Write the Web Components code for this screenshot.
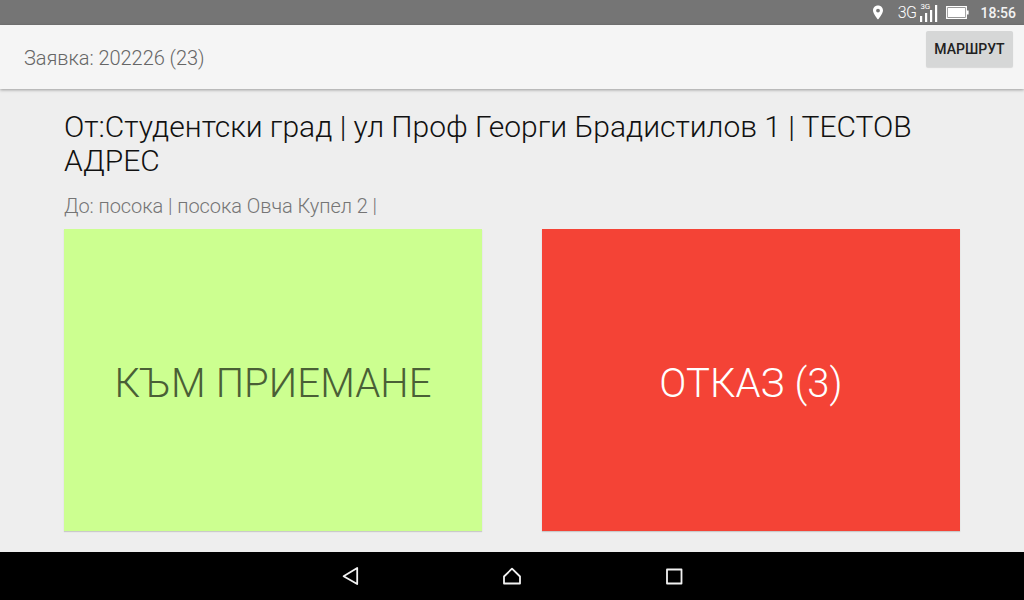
<!DOCTYPE html>
<html lang="bg">
<head>
<meta charset="utf-8">
<title>Заявка</title>
<style>
  html, body { margin: 0; height: 100%; }
  body { font-family: Roboto, "Liberation Sans", sans-serif; background: #eeeeee; overflow: hidden; }
  #app { display: flex; flex-direction: column; width: 1024px; height: 600px; }
</style>
</head>
<body>
<div id="app">
  <status-bar time="18:56"></status-bar>
  <app-toolbar>
    Заявка: 202226 (23)
    <flat-button slot="action">МАРШРУТ</flat-button>
  </app-toolbar>
  <order-view>
    <span slot="from">От:Студентски град | ул Проф Георги Брадистилов 1 | ТЕСТОВ АДРЕС</span>
    <span slot="to">До: посока | посока Овча Купел 2 |</span>
    <big-action slot="actions" style="--bg:#ccff90;--fg:#4a5f36">КЪМ ПРИЕМАНЕ</big-action>
    <big-action slot="actions" style="--bg:#f44336;--fg:#ffffff">ОТКАЗ (3)</big-action>
  </order-view>
  <nav-bar></nav-bar>
</div>

<script>
// status bar on top, icons are plain svg
class StatusBar extends HTMLElement {
  connectedCallback() {
    const root = this.shadowRoot || this.attachShadow({ mode: "open" });
    root.innerHTML = `
      <style>
        :host { display: flex; flex: none; height: 25px; background: #757575; color: #fff;
                align-items: center; justify-content: flex-end; padding-right: 8px;
                font: 500 14px Roboto, sans-serif; box-sizing: border-box; }
        svg { display: block; flex: none; }
        .net { font-weight: 300; font-size: 16px; margin-left: 14px; letter-spacing: -0.6px; }
        .time { margin-left: 11px; color: #f2f2f2; }
        .sup { position: absolute; top: 1px; left: 0; font-size: 8px; font-weight: 400; line-height: 8px; letter-spacing: -0.3px; }
        .signal { position: relative; margin-left: 4px; width: 18px; height: 21px; }
      </style>
      <svg width="12" height="15" viewBox="0 0 12 15">
        <path fill="#fff" fill-rule="evenodd" d="M6 0.5C2.9 0.5 1 2.8 1 5.4 1 8.8 6 14.5 6 14.5S11 8.8 11 5.4C11 2.8 9.1 0.5 6 0.5ZM6 3.7A1.9 1.9 0 1 1 6 7.5 1.9 1.9 0 0 1 6 3.7Z"/>
      </svg>
      <span class="net">3G</span>
      <span class="signal">
        <span class="sup">3G</span>
        <svg width="18" height="21" viewBox="0 0 18 21" style="position:absolute;top:0;left:0">
          <path fill="#fff" d="M0 14h2.2v6H0zM5 11h2.2v9H5zM10 8h2.2v12H10zM15 3h2.2v17H15z"/>
        </svg>
      </span>
      <svg width="23" height="13" viewBox="0 0 23 13" style="margin-left:8px">
        <path fill="none" stroke="#fff" stroke-width="1.3" d="M.7.7h19.6v11.6H.7z"/>
        <path fill="#fff" d="M2 2h17v9H2zM21 4.5h1.6v4H21z"/>
      </svg>
      <span class="time">${this.getAttribute("time")}</span>
    `;
  }
}

class AppToolbar extends HTMLElement {
  constructor() {
    super();
    this.attachShadow({ mode: "open" });
    this.shadowRoot.innerHTML = `
      <style>
        :host { display: flex; flex: none; height: 64px; background: #f5f5f5; color: #666;
                box-sizing: border-box; padding: 0 11px 0 24px; position: relative; z-index: 1;
                box-shadow: 0 1px 3px rgba(0,0,0,.35); font: 300 20px Roboto, sans-serif; }
        .title { flex: 1; align-self: center; padding-top: 2px; letter-spacing: -0.05px; }
        .action { padding-top: 6px; letter-spacing: 0; }
      </style>
      <div class="title"><slot></slot></div>
      <div class="action"><slot name="action"></slot></div>
    `;
  }
}

class FlatButton extends HTMLElement {
  constructor() {
    super();
    this.attachShadow({ mode: "open" });
    this.shadowRoot.innerHTML = `
      <style>
        :host { display: flex; align-items: center; justify-content: center; width: 87px; height: 36px;
                background: #d6d7d7; color: #212121; border-radius: 2px;
                box-shadow: 0 1px 1px rgba(0,0,0,.12); font: 500 14px Roboto, sans-serif; }
      </style>
      <slot></slot>
    `;
  }
}

class OrderView extends HTMLElement {
  constructor() {
    super();
    this.attachShadow({ mode: "open" });
    this.shadowRoot.innerHTML = `
      <style>
        :host { display: block; flex: 1; min-height: 0; background: #eeeeee; box-sizing: border-box;
                padding: 21px 64px 0; font-family: Roboto, sans-serif; font-weight: 300; }
        .from { font-size: 30px; line-height: 34px; color: #111; letter-spacing: -0.02px; }
        .to { font-size: 20px; line-height: 24px; color: #757575; margin-top: 16px; height: 35px; letter-spacing: -0.06px; }
        .actions { display: grid; grid-template-columns: 418px 418px; justify-content: space-between; height: 302px; }
      </style>
      <div class="from"><slot name="from"></slot></div>
      <div class="to"><slot name="to"></slot></div>
      <div class="actions"><slot name="actions"></slot></div>
    `;
  }
}

class BigAction extends HTMLElement {
  constructor() {
    super();
    this.attachShadow({ mode: "open" });
    this.shadowRoot.innerHTML = `
      <style>
        :host { display: flex; align-items: center; justify-content: center;
                background: var(--bg); color: var(--fg);
                box-shadow: 0 1px 1px rgba(0,0,0,.15);
                font: 300 40px Roboto, sans-serif; letter-spacing: 0.1px; }
        div { padding-top: 7px; }
      </style>
      <div><slot></slot></div>
    `;
  }
}

class NavBar extends HTMLElement {
  constructor() {
    super();
    this.attachShadow({ mode: "open" });
    this.shadowRoot.innerHTML = `
      <style>
        :host { display: grid; grid-template-columns: repeat(3, 24px); justify-content: center; column-gap: 138px;
                flex: none; height: 48px; background: #000; align-items: center; }
        svg { display: block; }
      </style>
      <svg width="24" height="24" viewBox="0 0 24 24"><path fill="none" stroke="#f2f2f2" stroke-width="1.8" stroke-linejoin="round" d="M19.2 5V21L5.6 13.2Z" transform="translate(0 -1)"/></svg>
      <svg width="24" height="24" viewBox="0 0 24 24"><path fill="none" stroke="#f2f2f2" stroke-width="1.8" stroke-linejoin="round" d="M12 5.2L20 13V20H4V13Z" transform="translate(0 -.5)"/></svg>
      <svg width="24" height="24" viewBox="0 0 24 24"><path fill="none" stroke="#f2f2f2" stroke-width="1.8" stroke-linejoin="round" d="M5 5.5H19.5V19.5H5Z"/></svg>
    `;
  }
}

customElements.define("status-bar", StatusBar);
customElements.define("app-toolbar", AppToolbar);
customElements.define("flat-button", FlatButton);
customElements.define("order-view", OrderView);
customElements.define("big-action", BigAction);
customElements.define("nav-bar", NavBar);
</script>
</body>
</html>
